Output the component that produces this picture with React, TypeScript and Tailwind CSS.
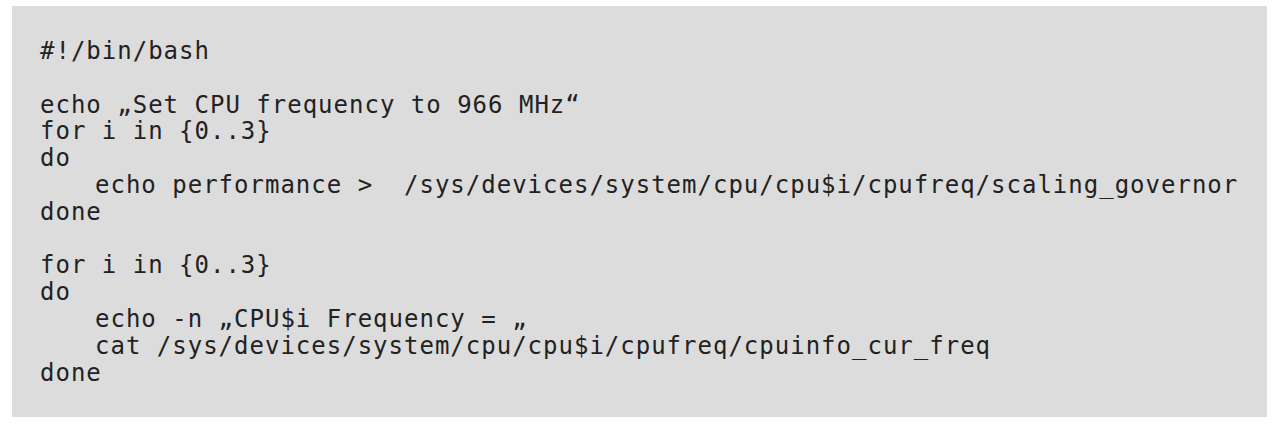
const lines: { text: string; indent?: boolean }[] = [
  { text: "#!/bin/bash" },
  { text: "" },
  { text: "echo \u201ESet CPU frequency to 966 MHz\u201C" },
  { text: "for i in {0..3}" },
  { text: "do" },
  { text: "echo performance >  /sys/devices/system/cpu/cpu$i/cpufreq/scaling_governor", indent: true },
  { text: "done" },
  { text: "" },
  { text: "for i in {0..3}" },
  { text: "do" },
  { text: "echo -n \u201ECPU$i Frequency = \u201E", indent: true },
  { text: "cat /sys/devices/system/cpu/cpu$i/cpufreq/cpuinfo_cur_freq", indent: true },
  { text: "done" },
];

const App = () => {
  return (
    <div className="w-[1280px] h-[426px] bg-white pt-[6px] pl-[12px]">
      <div className="w-[1255px] h-[411px] bg-[#dcdcdd] pt-[32px] pl-[28px]">
        <pre className="font-['DejaVu_Sans_Mono',monospace] text-[24px] leading-[26.8px] tracking-[1px] text-[#222222]">
          {lines.map((line, i) => (
            <div key={i} className={line.indent ? "pl-[55px] h-[26.8px]" : "h-[26.8px]"}>
              {line.text}
            </div>
          ))}
        </pre>
      </div>
    </div>
  );
};

export default App;
